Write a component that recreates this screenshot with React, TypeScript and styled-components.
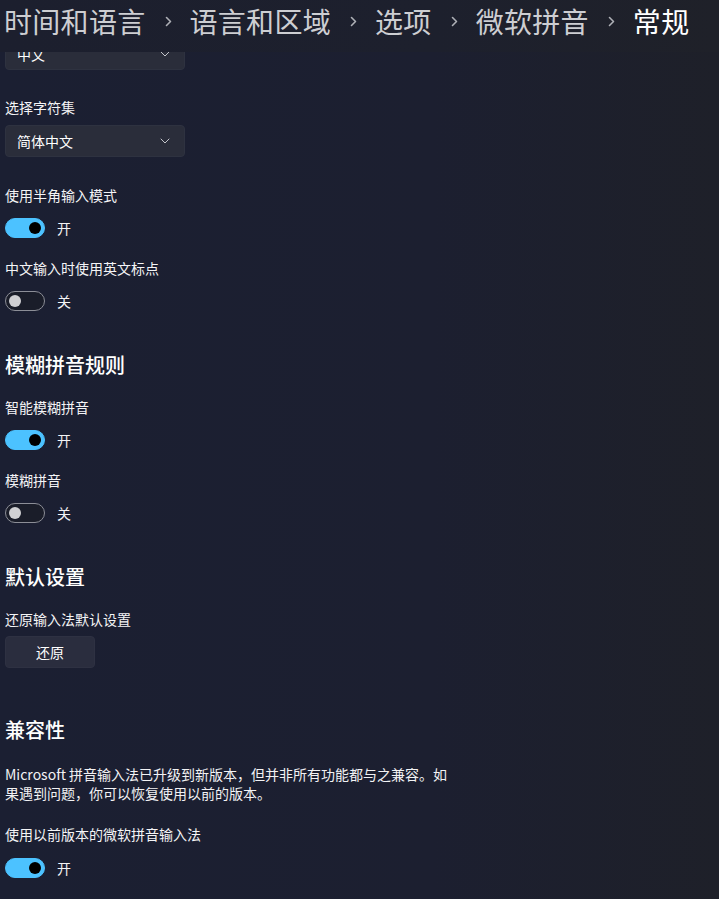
import React from "react";
import styled, { createGlobalStyle } from "styled-components";

const GlobalStyle = createGlobalStyle`
  html, body {
    margin: 0;
    padding: 0;
    background: #1c1f30;
  }
  body {
    font-family: "Noto Sans CJK SC", "Noto Sans", "Open Sans", sans-serif;
    color: #ffffff;
    -webkit-font-smoothing: antialiased;
  }
  * { box-sizing: border-box; }
`;

const Page = styled.div`
  min-height: 899px;
  background: linear-gradient(90deg, #1b1f32 0%, #1c1f30 60%, #1e2029 100%);
  padding: 38px 0 40px 5px;
`;

const Header = styled.header`
  position: fixed;
  top: 0;
  left: 0;
  right: 0;
  height: 52px;
  background: linear-gradient(90deg, #1c1f2e 0%, #1d202d 60%, #1f2129 100%);
  display: flex;
  align-items: flex-start;
  padding-left: 4px;
  z-index: 10;
`;

const Crumb = styled.span<{ $current?: boolean }>`
  font-size: 28px;
  line-height: 42px;
  letter-spacing: 0.3px;
  color: ${(p) => (p.$current ? "#ffffff" : "#cdced2")};
  font-weight: 400;
  white-space: nowrap;
`;

const Sep = styled.span`
  display: flex;
  align-items: center;
  height: 42px;
  margin: 0 18px 0 19px;
  color: #a9aab0;
`;

const Content = styled.main`
  display: flex;
  flex-direction: column;
  align-items: flex-start;
`;

const Label = styled.div<{ $top?: number }>`
  font-size: 14px;
  line-height: 20px;
  margin-top: ${(p) => p.$top ?? 0}px;
  color: #f4f4f6;
`;

const Heading = styled.h2<{ $top?: number }>`
  margin: ${(p) => p.$top ?? 0}px 0 0 0;
  font-size: 20px;
  line-height: 28px;
  font-weight: 500;
  color: #ffffff;
`;

const Paragraph = styled.p<{ $top?: number }>`
  margin: ${(p) => p.$top ?? 0}px 0 0 0;
  max-width: 448px;
  font-size: 14px;
  line-height: 19px;
  color: #f2f2f4;
`;

const Select = styled.div<{ $top?: number }>`
  margin-top: ${(p) => p.$top ?? 0}px;
  width: 180px;
  height: 32px;
  border-radius: 4px;
  background: #2a2d3a;
  border: 1px solid #2e3240;
  display: flex;
  align-items: center;
  justify-content: space-between;
  padding: 0 14px 0 11px;
  font-size: 14px;
  color: #ffffff;
`;

const Button = styled.button<{ $top?: number }>`
  margin-top: ${(p) => p.$top ?? 0}px;
  width: 90px;
  height: 32px;
  border-radius: 4px;
  border: 1px solid #2e3142;
  background: #2a2d3e;
  color: #ffffff;
  font-family: inherit;
  font-size: 14px;
  padding: 0;
`;

const ToggleRow = styled.div<{ $top?: number }>`
  margin-top: ${(p) => p.$top ?? 0}px;
  display: flex;
  align-items: center;
  gap: 12px;
  height: 20px;
`;

const Track = styled.div<{ $on: boolean }>`
  width: 40px;
  height: 20px;
  border-radius: 10px;
  position: relative;
  background: ${(p) => (p.$on ? "#4cc2ff" : "#1a1d29")};
  border: 1px solid ${(p) => (p.$on ? "#4cc2ff" : "#8c8e97")};
`;

const Thumb = styled.div<{ $on: boolean }>`
  position: absolute;
  top: 50%;
  width: 12px;
  height: 12px;
  margin-top: -6px;
  border-radius: 50%;
  background: ${(p) => (p.$on ? "#000000" : "#d0d0d3")};
  left: ${(p) => (p.$on ? "23px" : "3px")};
`;

const StateText = styled.span`
  font-size: 14px;
  line-height: 20px;
  color: #f4f4f6;
`;

const Chevron = () => (
  <svg width="10" height="6" viewBox="0 0 10 6" fill="none">
    <path d="M1 1 L5 5 L9 1" stroke="#c4c6cc" strokeWidth="1" strokeLinecap="round" strokeLinejoin="round" />
  </svg>
);

const RightChevron = () => (
  <svg width="7" height="11" viewBox="0 0 7 11" fill="none">
    <path d="M1.5 1.5 L5.5 5.5 L1.5 9.5" stroke="#aeb0b6" strokeWidth="1.6" strokeLinecap="round" strokeLinejoin="round" />
  </svg>
);

const Toggle = ({ on, top }: { on: boolean; top?: number }) => (
  <ToggleRow $top={top}>
    <Track $on={on}>
      <Thumb $on={on} />
    </Track>
    <StateText>{on ? "开" : "关"}</StateText>
  </ToggleRow>
);

const crumbs = ["时间和语言", "语言和区域", "选项", "微软拼音", "常规"];

export default function App() {
  return (
    <>
      <GlobalStyle />
      <Header>
        {crumbs.map((c, i) => (
          <React.Fragment key={c}>
            {i > 0 && (
              <Sep>
                <RightChevron />
              </Sep>
            )}
            <Crumb $current={i === crumbs.length - 1}>{c}</Crumb>
          </React.Fragment>
        ))}
      </Header>
      <Page>
        <Content>
          <Select>
            <span>中文</span>
            <Chevron />
          </Select>

          <Label $top={27}>选择字符集</Label>
          <Select $top={8}>
            <span>简体中文</span>
            <Chevron />
          </Select>

          <Label $top={28}>使用半角输入模式</Label>
          <Toggle on top={13} />

          <Label $top={20}>中文输入时使用英文标点</Label>
          <Toggle on={false} top={13} />

          <Heading $top={40}>模糊拼音规则</Heading>
          <Label $top={18}>智能模糊拼音</Label>
          <Toggle on top={13} />

          <Label $top={20}>模糊拼音</Label>
          <Toggle on={false} top={13} />

          <Heading $top={40}>默认设置</Heading>
          <Label $top={18}>还原输入法默认设置</Label>
          <Button $top={7}>还原</Button>

          <Heading $top={48}>兼容性</Heading>
          <Paragraph $top={21}>
            Microsoft 拼音输入法已升级到新版本，但并非所有功能都与之兼容。如果遇到问题，你可以恢复使用以前的版本。
          </Paragraph>
          <Label $top={21}>使用以前版本的微软拼音输入法</Label>
          <Toggle on top={14} />
        </Content>
      </Page>
    </>
  );
}
